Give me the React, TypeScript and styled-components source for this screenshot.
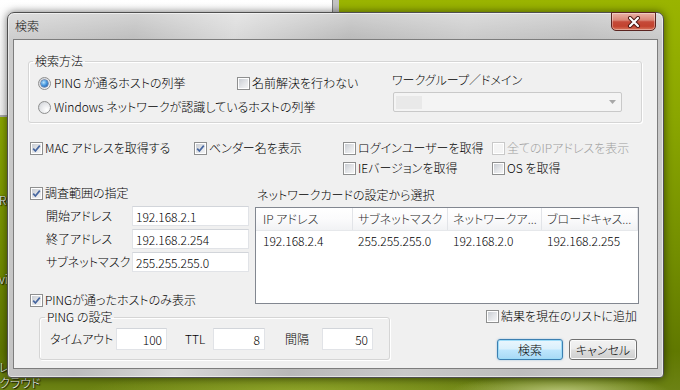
import React from "react";
import styled, { createGlobalStyle } from "styled-components";

const GlobalStyle = createGlobalStyle`
  * {
    box-sizing: border-box;
  }
  html, body {
    margin: 0;
    padding: 0;
    background: #6f8a00;
  }
  body {
    font-family: "Noto Sans CJK JP", "Noto Sans", "Liberation Sans", sans-serif;
    font-size: 12px;
    font-weight: 300;
    font-feature-settings: "palt";
    color: #000;
  }
`;

const Desktop = styled.div`
  position: relative;
  width: 680px;
  height: 390px;
  overflow: hidden;
  background:
    radial-gradient(ellipse 110px 18px at 560px 392px, rgba(205, 215, 150, 0.75), transparent),
    radial-gradient(ellipse 220px 26px at 300px 394px, rgba(170, 190, 60, 0.6), transparent),
    linear-gradient(180deg, #9ab400 0%, #8aa600 30%, #738e00 65%, #607800 90%, #6c8214 100%);
`;

const BackWindow = styled.div`
  position: absolute;
  left: 0;
  top: 0;
  width: 339px;
  height: 117px;
  background: linear-gradient(180deg, #ffffff 0%, #f1f1f1 100%);
  border-right: 6px solid #c3c3c3;
  border-bottom: 2px solid #a9a9a9;
  box-shadow: inset -1px 0 0 #7e7e7e;
`;

const IconLabel = styled.span<{ $top: number }>`
  position: absolute;
  left: -1px;
  top: ${(p) => p.$top}px;
  color: #fff;
  font-size: 12px;
  line-height: 14px;
  white-space: nowrap;
  text-shadow: 0 0 2px #000, 1px 1px 1px #000;
`;

/* ---- window frame ---- */

const Dialog = styled.div`
  position: absolute;
  left: 7px;
  top: 12px;
  width: 657px;
  height: 366px;
  display: flex;
  flex-direction: column;
  padding: 0 6px 9px;
  border: 1px solid #4f4f4f;
  border-radius: 7px 7px 4px 4px;
  background:
    linear-gradient(180deg, rgba(255, 255, 255, 0.35) 0%, rgba(255, 255, 255, 0) 8%),
    linear-gradient(100deg, #cdcdcd 0%, #bcbcbc 18%, #d8d8d8 32%, #b8b8b8 48%, #c9c9c9 64%, #bdbdbd 80%, #cfcfcf 100%);
  box-shadow: 0 0 8px rgba(0, 0, 0, 0.55), inset 0 0 0 1px rgba(255, 255, 255, 0.55);
`;

const TitleBar = styled.div`
  height: 27px;
  display: flex;
  align-items: flex-start;
`;

const TitleText = styled.span`
  padding: 5px 0 0 1px;
  line-height: 16px;
  font-size: 12px;
  color: #111;
`;

const CloseButton = styled.div`
  width: 45px;
  height: 19px;
  margin: -1px 1px 0 auto;
  display: flex;
  align-items: center;
  justify-content: center;
  border: 1px solid #5b2420;
  border-radius: 0 0 5px 5px;
  background: linear-gradient(180deg, #eab2a6 0%, #d98676 42%, #c54a39 52%, #c2432f 78%, #d9785f 100%);
  box-shadow: inset 0 0 0 1px rgba(255, 255, 255, 0.35);
`;

const Client = styled.div`
  flex: 1;
  display: flex;
  flex-direction: column;
  padding: 13px 15px 0 14px;
  background: #f0f0f0;
  box-shadow: 0 0 0 1px #7d7d7d;
`;

/* ---- group boxes ---- */

const Group = styled.fieldset<{ $width?: number }>`
  margin: 0;
  min-width: 0;
  width: ${(p) => (p.$width ? `${p.$width}px` : "auto")};
  padding: 3px 8px 7px 9px;
  border: 1px solid #d5d5d5;
  border-radius: 3px;
  box-shadow: inset 1px 1px 0 #ffffff, 1px 1px 0 #ffffff;
`;

const Legend = styled.legend`
  margin-left: -5px;
  padding: 0 2px;
  line-height: 16px;
  font-size: 12px;
`;

const MethodRow = styled.div`
  display: grid;
  grid-template-columns: 199px 155px 230px;
`;

const Stack = styled.div<{ $gap?: number; $top?: number }>`
  display: flex;
  flex-direction: column;
  gap: ${(p) => p.$gap ?? 0}px;
  padding-top: ${(p) => p.$top ?? 0}px;
`;

const Caption = styled.span`
  line-height: 16px;
  white-space: nowrap;
`;

const Combo = styled.div`
  width: 229px;
  height: 20px;
  margin: 4px 0 0 1px;
  display: flex;
  align-items: center;
  justify-content: space-between;
  padding: 0 5px 0 2px;
  border: 1px solid #c9c9c9;
  border-radius: 2px;
  background: #f4f4f4;
`;

const ComboSelection = styled.span`
  width: 26px;
  height: 13px;
  background: #e9e9e9;
`;

/* ---- checkbox / radio ---- */

const Option = styled.label<{ $disabled?: boolean }>`
  display: flex;
  align-items: center;
  gap: 2px;
  height: 16px;
  line-height: 16px;
  white-space: nowrap;
  color: ${(p) => (p.$disabled ? "#a0a0a0" : "#000")};
`;

const CheckBox = styled.span<{ $disabled?: boolean }>`
  flex: none;
  width: 13px;
  height: 13px;
  display: flex;
  align-items: center;
  justify-content: center;
  border: 1px solid ${(p) => (p.$disabled ? "#c9c9c9" : "#8e8f8f")};
  background: ${(p) =>
    p.$disabled ? "#f4f4f4" : "linear-gradient(135deg, #c4c8ce 0%, #e4e6e9 55%, #f7f7f7 100%)"};
  box-shadow: inset 0 0 0 1px #ffffff;
`;

const RadioCircle = styled.span<{ $checked?: boolean }>`
  flex: none;
  width: 13px;
  height: 13px;
  margin-right: 1px;
  display: flex;
  align-items: center;
  justify-content: center;
  border: 1px solid #8e8f8f;
  border-radius: 50%;
  background: radial-gradient(circle at 70% 70%, #ffffff 0%, #e2e4e7 60%, #c7cad0 100%);

  &::after {
    content: "";
    display: ${(p) => (p.$checked ? "block" : "none")};
    width: 7px;
    height: 7px;
    border-radius: 50%;
    background: radial-gradient(circle at 38% 35%, #bfe5fb 0%, #4a9ae0 45%, #13428f 100%);
    box-shadow: 0 0 0 0.5px #23467f;
  }
`;

const CheckMark = () => (
  <svg width="9" height="9" viewBox="0 0 9 9">
    <path d="M1.2 4.6 L3.4 7 L7.8 1.6" fill="none" stroke="#4767a0" strokeWidth="1.7" />
  </svg>
);

const Check: React.FC<{ checked?: boolean; disabled?: boolean; children: React.ReactNode }> = ({
  checked,
  disabled,
  children,
}) => (
  <Option $disabled={disabled}>
    <CheckBox $disabled={disabled}>{checked && <CheckMark />}</CheckBox>
    {children}
  </Option>
);

const Radio: React.FC<{ checked?: boolean; children: React.ReactNode }> = ({ checked, children }) => (
  <Option>
    <RadioCircle $checked={checked} />
    {children}
  </Option>
);

/* ---- option rows ---- */

const OptionsGrid = styled.div`
  display: grid;
  grid-template-columns: 164px 149px 149px auto;
  grid-auto-rows: 20px;
  align-items: center;
  margin-top: 15px;
  padding-left: 2px;
`;

const Middle = styled.div`
  display: flex;
  align-items: flex-start;
`;

const RangeCol = styled.div`
  width: 227px;
  display: flex;
  flex-direction: column;
  padding: 7px 0 0 2px;
`;

const AddressGrid = styled.div`
  display: grid;
  grid-template-columns: 86px 117px;
  grid-auto-rows: 20px;
  row-gap: 3px;
  align-items: center;
  margin: 5px 0 20px 16px;
`;

const FieldLabel = styled.span`
  line-height: 16px;
  white-space: nowrap;
`;

const TextBox = styled.input<{ $w: number; $right?: boolean }>`
  width: ${(p) => p.$w}px;
  height: 100%;
  margin: 0;
  padding: 0 ${(p) => (p.$right ? 4 : 2)}px 0 ${(p) => (p.$right ? 2 : 3)}px;
  border: 1px solid #e1e3e7;
  border-top-color: #d2d5da;
  background: #fff;
  font: inherit;
  font-size: 12px;
  color: #000;
  text-align: ${(p) => (p.$right ? "right" : "left")};
  outline: none;
`;

const CardCol = styled.div`
  width: 384px;
  display: flex;
  flex-direction: column;
  padding-top: 9px;
`;

const CardCaption = styled.span`
  padding-left: 2px;
  line-height: 16px;
`;

const ListView = styled.div`
  height: 97px;
  margin-top: 4px;
  border: 1px solid #828790;
  background: #fff;
`;

const ListRow = styled.div<{ $head?: boolean }>`
  display: grid;
  grid-template-columns: 97px 95px 94px 96px;
  height: ${(p) => (p.$head ? 23 : 18)}px;
  padding-top: ${(p) => (p.$head ? 0 : 2)}px;
  background: ${(p) => (p.$head ? "linear-gradient(180deg, #ffffff 0%, #fbfbfc 50%, #f1f2f4 100%)" : "transparent")};
  border-bottom: ${(p) => (p.$head ? "1px solid #e6e8eb" : "none")};
`;

const HeadCell = styled.div<{ $first?: boolean }>`
  padding-left: ${(p) => (p.$first ? 7 : 5)}px;
  line-height: 22px;
  color: #2b2b2b;
  white-space: nowrap;
  overflow: hidden;
  border-right: 1px solid #e2e4e8;
`;

const Cell = styled.div<{ $first?: boolean }>`
  padding-left: ${(p) => (p.$first ? 7 : 5)}px;
  line-height: 16px;
  white-space: nowrap;
`;

/* ---- bottom ---- */

const Bottom = styled.div`
  display: flex;
  align-items: flex-start;
`;

const PingGroup = styled(Group)`
  margin: 1px 0 0 11px;
  padding: 3px 16px 9px 10px;
`;

const PingRow = styled.div`
  display: flex;
  align-items: center;
  height: 22px;
`;

const PingLabel = styled.span<{ $w: number; $lead?: number }>`
  width: ${(p) => p.$w}px;
  margin-left: ${(p) => p.$lead ?? 0}px;
  line-height: 16px;
  white-space: nowrap;
`;

const Actions = styled.div`
  margin: 0 5px 0 auto;
  display: flex;
  flex-direction: column;
  align-items: flex-end;
`;

const ButtonRow = styled.div`
  display: flex;
  gap: 6px;
  margin-top: 15px;
`;

const Button = styled.button<{ $w: number; $primary?: boolean }>`
  width: ${(p) => p.$w}px;
  height: 21px;
  margin: 0;
  padding: 0;
  font: inherit;
  font-size: 12px;
  line-height: 16px;
  color: #000;
  border-radius: 3px;
  border: 1px solid ${(p) => (p.$primary ? "#3c7fb1" : "#707070")};
  background: ${(p) =>
    p.$primary
      ? "linear-gradient(180deg, #eaf6fd 0%, #d9f0fc 48%, #bee6fd 52%, #a7d9f5 100%)"
      : "linear-gradient(180deg, #f2f2f2 0%, #ebebeb 48%, #dddddd 52%, #cfcfcf 100%)"};
  box-shadow: ${(p) =>
    p.$primary ? "inset 0 0 0 1px #9edcf8, 0 0 2px rgba(60, 140, 200, 0.5)" : "inset 0 0 0 1px #fbfbfb"};
`;

const CloseGlyph = () => (
  <svg width="16" height="12" viewBox="0 0 16 12">
    <path d="M4 2 L12 10 M12 2 L4 10" stroke="#4a1510" strokeWidth="4" strokeLinecap="round" />
    <path d="M4 2 L12 10 M12 2 L4 10" stroke="#ffffff" strokeWidth="2.2" strokeLinecap="round" />
  </svg>
);

const ComboArrow = () => (
  <svg width="7" height="4" viewBox="0 0 7 4">
    <path d="M0 0 L7 0 L3.5 4 Z" fill="#a8a8a8" />
  </svg>
);

const rows = [
  ["開始アドレス", "192.168.2.1"],
  ["終了アドレス", "192.168.2.254"],
  ["サブネットマスク", "255.255.255.0"],
];

const App: React.FC = () => (
  <>
    <GlobalStyle />
    <Desktop>
      <BackWindow />
      <IconLabel $top={193}>Re</IconLabel>
      <IconLabel $top={272}>vi</IconLabel>
      <IconLabel $top={360}>レ</IconLabel>
      <IconLabel $top={376}>クラウド</IconLabel>
      <Dialog>
        <TitleBar>
          <TitleText>検索</TitleText>
          <CloseButton>
            <CloseGlyph />
          </CloseButton>
        </TitleBar>
        <Client>
          <Group>
            <Legend>検索方法</Legend>
            <MethodRow>
              <Stack $gap={8} $top={3}>
                <Radio checked>PING が通るホストの列挙</Radio>
                <Radio>Windows ネットワークが認識しているホストの列挙</Radio>
              </Stack>
              <Stack $top={3}>
                <Check>名前解決を行わない</Check>
              </Stack>
              <Stack>
                <Caption>ワークグループ／ドメイン</Caption>
                <Combo>
                  <ComboSelection />
                  <ComboArrow />
                </Combo>
              </Stack>
            </MethodRow>
          </Group>

          <OptionsGrid>
            <Check checked>MAC アドレスを取得する</Check>
            <Check checked>ベンダー名を表示</Check>
            <Check>ログインユーザーを取得</Check>
            <Check disabled>全てのIPアドレスを表示</Check>
            <span />
            <span />
            <Check>IEバージョンを取得</Check>
            <Check>OS を取得</Check>
          </OptionsGrid>

          <Middle>
            <RangeCol>
              <Check checked>調査範囲の指定</Check>
              <AddressGrid>
                {rows.map(([label, value]) => (
                  <React.Fragment key={label}>
                    <FieldLabel>{label}</FieldLabel>
                    <TextBox $w={117} readOnly defaultValue={value} />
                  </React.Fragment>
                ))}
              </AddressGrid>
              <Check checked>PINGが通ったホストのみ表示</Check>
            </RangeCol>
            <CardCol>
              <CardCaption>ネットワークカードの設定から選択</CardCaption>
              <ListView>
                <ListRow $head>
                  <HeadCell $first>IP アドレス</HeadCell>
                  <HeadCell>サブネットマスク</HeadCell>
                  <HeadCell>ネットワークア...</HeadCell>
                  <HeadCell>ブロードキャス...</HeadCell>
                </ListRow>
                <ListRow>
                  <Cell $first>192.168.2.4</Cell>
                  <Cell>255.255.255.0</Cell>
                  <Cell>192.168.2.0</Cell>
                  <Cell>192.168.2.255</Cell>
                </ListRow>
              </ListView>
            </CardCol>
          </Middle>

          <Bottom>
            <PingGroup $width={351}>
              <Legend>PING の設定</Legend>
              <PingRow>
                <PingLabel $w={66}>タイムアウト</PingLabel>
                <TextBox $w={51} $right readOnly defaultValue="100" />
                <PingLabel $w={28} $lead={18}>TTL</PingLabel>
                <TextBox $w={52} $right readOnly defaultValue="8" />
                <PingLabel $w={37} $lead={20}>間隔</PingLabel>
                <TextBox $w={51} $right readOnly defaultValue="50" />
              </PingRow>
            </PingGroup>
            <Actions>
              <Check>結果を現在のリストに追加</Check>
              <ButtonRow>
                <Button $w={66} $primary>検索</Button>
                <Button $w={68}>キャンセル</Button>
              </ButtonRow>
            </Actions>
          </Bottom>
        </Client>
      </Dialog>
    </Desktop>
  </>
);

export default App;
